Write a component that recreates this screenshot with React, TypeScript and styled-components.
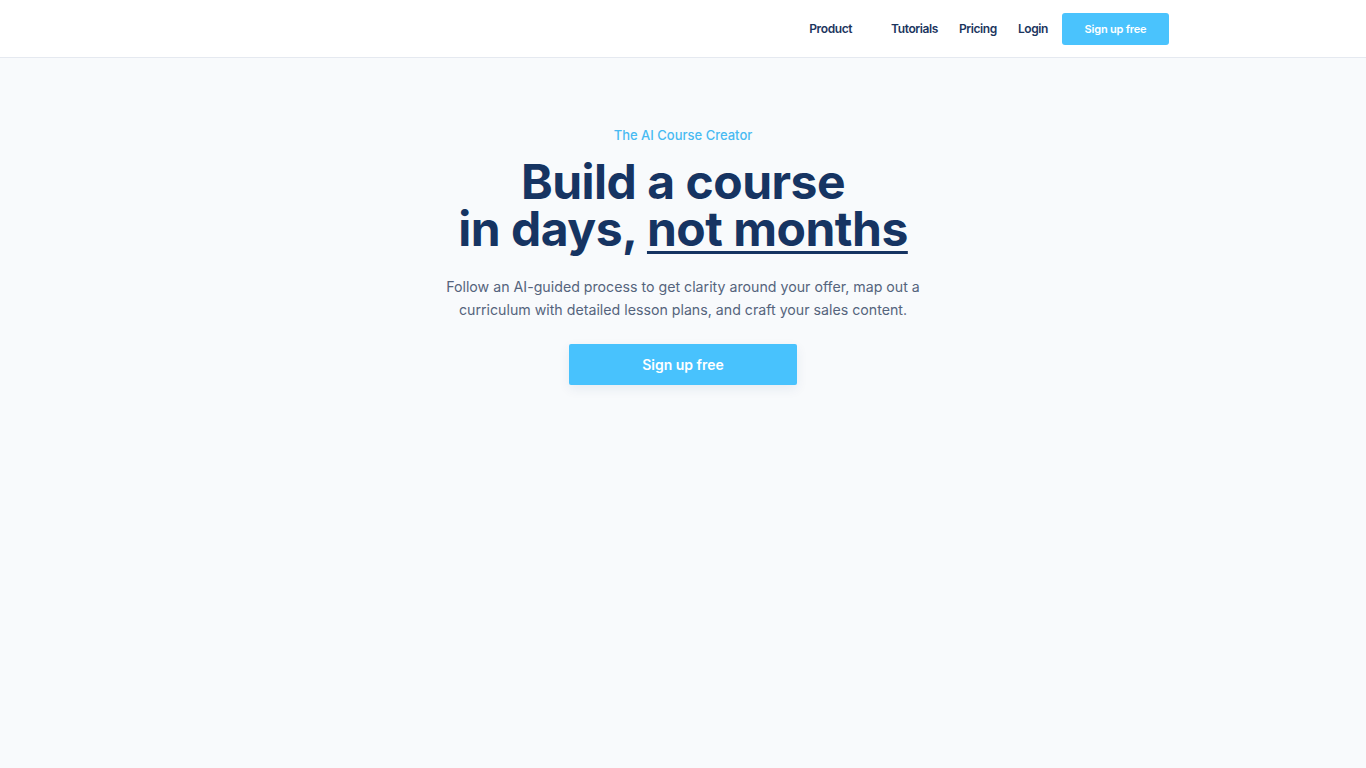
import React from "react";
import styled, { createGlobalStyle } from "styled-components";

const Global = createGlobalStyle`
  * { box-sizing: border-box; }
  html, body { margin: 0; padding: 0; }
  body {
    font-family: Inter, "Noto Sans", sans-serif;
    background: #f8fafc;
    -webkit-font-smoothing: antialiased;
  }
`;

const Page = styled.div`
  min-height: 768px;
  display: flex;
  flex-direction: column;
  background: #f8fafc;
`;

const Header = styled.header`
  height: 58px;
  background: #ffffff;
  border-bottom: 1px solid #e5e9f0;
  display: flex;
  align-items: center;
  justify-content: flex-end;
  padding-right: 197px;
`;

const Nav = styled.nav`
  display: flex;
  align-items: center;
`;

const NavLink = styled.a<{ $gap?: number }>`
  font-size: 12px;
  font-weight: 600;
  letter-spacing: -0.4px;
  color: #1b355e;
  text-decoration: none;
  margin-right: ${(p) => p.$gap ?? 21}px;
  cursor: pointer;
`;

const NavButton = styled.a`
  display: inline-flex;
  align-items: center;
  justify-content: center;
  width: 107px;
  height: 32px;
  background: #4ac3fd;
  color: #ffffff;
  font-size: 11px;
  font-weight: 600;
  letter-spacing: -0.2px;
  border-radius: 3px;
  margin-left: -7px;
  cursor: pointer;
`;

const Hero = styled.section`
  display: flex;
  flex-direction: column;
  align-items: center;
  text-align: center;
  padding-top: 67px;
`;

const Eyebrow = styled.p`
  margin: 0;
  font-size: 13px;
  line-height: 20px;
  font-weight: 500;
  color: #48baf2;
`;

const Title = styled.h1`
  margin: 13px 0 0;
  font-size: 48px;
  line-height: 47px;
  font-weight: 700;
  letter-spacing: -0.5px;
  color: #163462;
`;

const Underlined = styled.span`
  text-decoration: underline;
  text-decoration-thickness: 3px;
  text-underline-offset: 5px;
`;

const Lead = styled.p`
  margin: 23px 0 0;
  max-width: 500px;
  font-size: 14.2px;
  line-height: 23px;
  color: #55647c;
`;

const CTA = styled.a`
  margin-top: 23px;
  display: inline-flex;
  align-items: center;
  justify-content: center;
  width: 228px;
  height: 41px;
  background: #48c2fd;
  color: #ffffff;
  font-size: 14px;
  font-weight: 600;
  border-radius: 2px;
  box-shadow: 0 4px 12px rgba(30, 60, 110, 0.08);
  cursor: pointer;
`;

export default function App() {
  return (
    <>
      <Global />
      <Page>
        <Header>
          <Nav>
            <NavLink $gap={39}>Product</NavLink>
            <NavLink>Tutorials</NavLink>
            <NavLink>Pricing</NavLink>
            <NavLink>Login</NavLink>
            <NavButton>Sign up free</NavButton>
          </Nav>
        </Header>
        <Hero>
          <Eyebrow>The AI Course Creator</Eyebrow>
          <Title>
            Build a course
            <br />
            in days, <Underlined>not months</Underlined>
          </Title>
          <Lead>
            Follow an AI-guided process to get clarity around your offer, map out a
            curriculum with detailed lesson plans, and craft your sales content.
          </Lead>
          <CTA>Sign up free</CTA>
        </Hero>
      </Page>
    </>
  );
}
